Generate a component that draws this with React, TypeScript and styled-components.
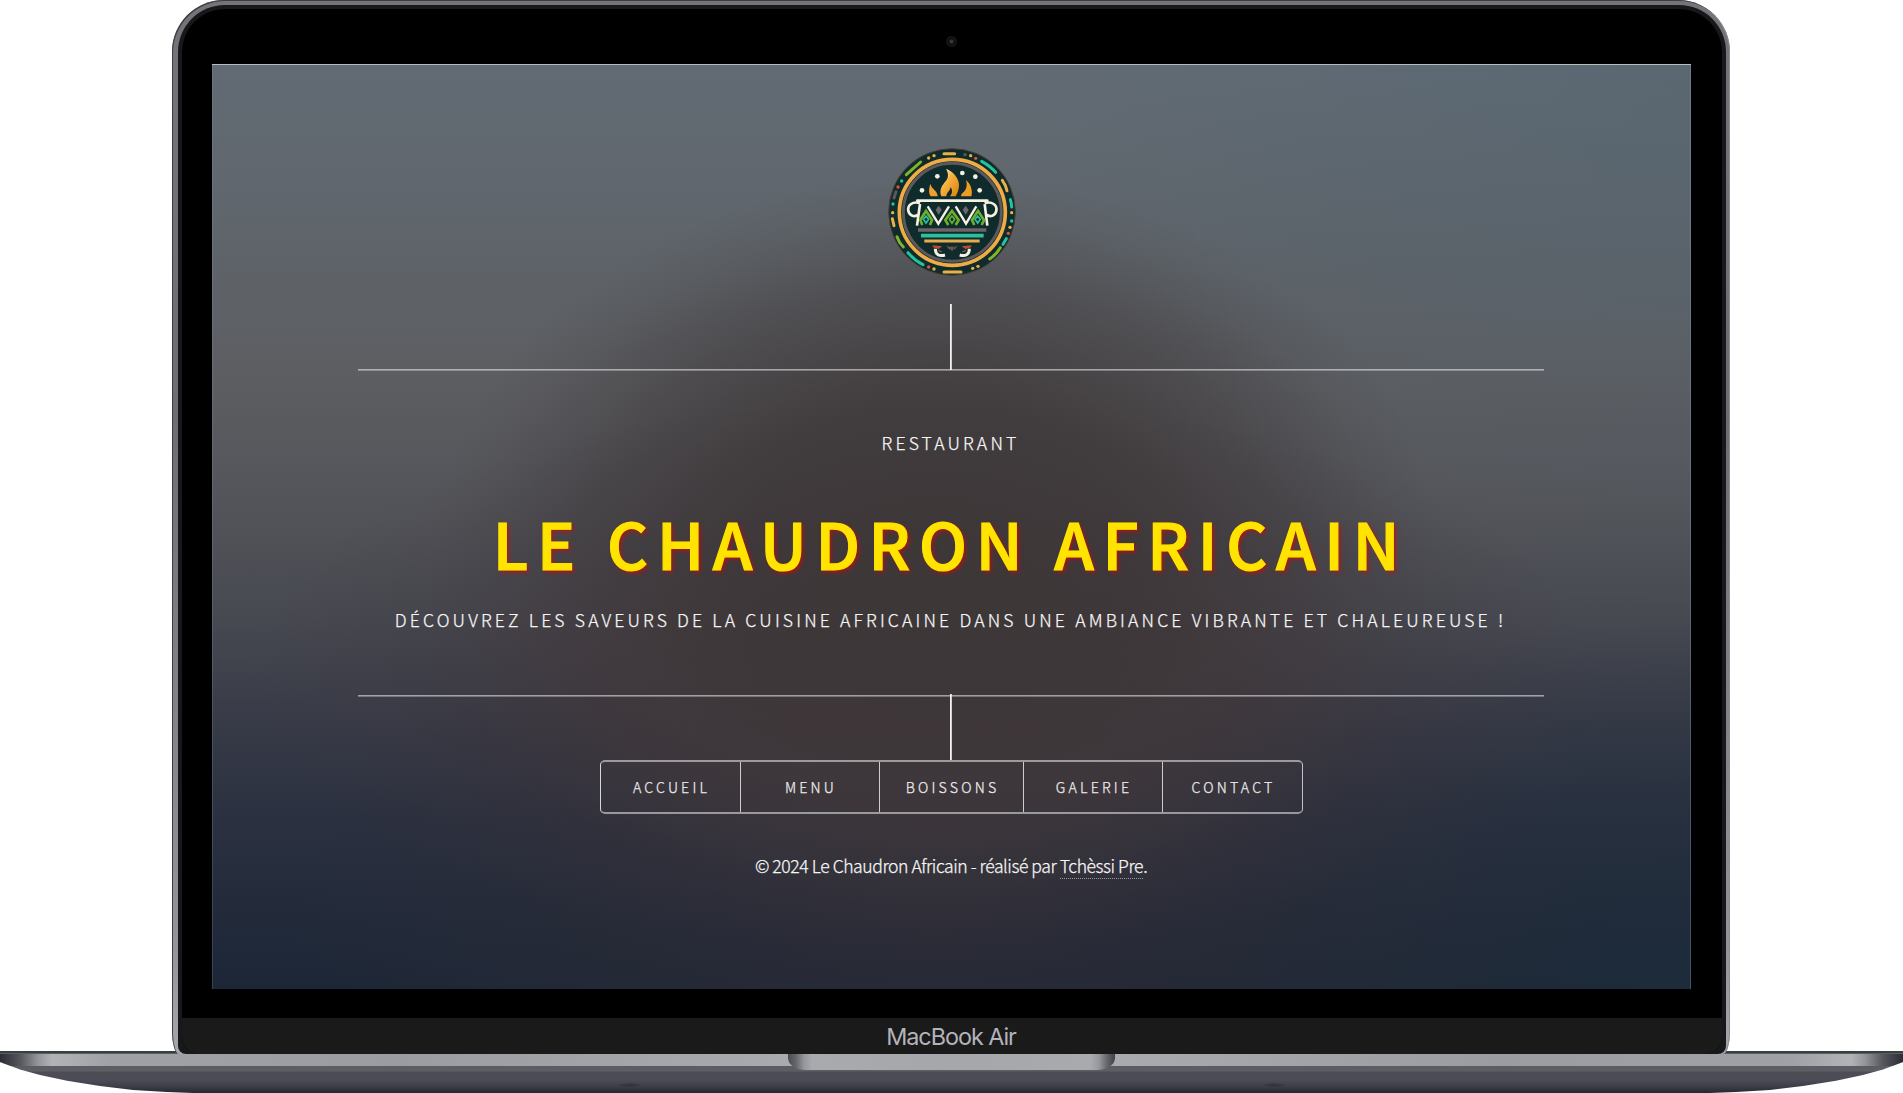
import React from "react";
import styled, { createGlobalStyle } from "styled-components";

const GlobalStyle = createGlobalStyle`
  *, *::before, *::after { box-sizing: border-box; }
  body { margin: 0; background: #fff; overflow: hidden; }
`;

const Laptop = styled.div`
  width: 1903px;
  height: 1093px;
  display: flex;
  flex-direction: column;
  align-items: center;
  overflow: hidden;
  background: #fff;
`;

const Lid = styled.div`
  position: relative;
  z-index: 1;
  flex: none;
  display: flex;
  width: 1558px;
  height: 1054px;
  margin-right: 1px;
  padding: 5px 4px 0 6px;
  border-radius: 52px 52px 7px 7px / 52px 52px 22px 22px;
  background: linear-gradient(#74747a, #6d6d74 40%, #94949b 90%, #a6a6ac);
  box-shadow: inset 1px 1px 0 #3c3c41, inset -1px 0 0 #8a8a90;
`;

const Rim = styled.div`
  flex: 1;
  min-width: 0;
  display: flex;
  padding: 4px 4px 0;
  border-radius: 47px 47px 8px 8px;
  background: #17181a;
`;

const Bezel = styled.div`
  flex: 1;
  min-width: 0;
  display: flex;
  flex-direction: column;
  align-items: center;
  overflow: hidden;
  padding-right: 2px;
  border-radius: 43px 43px 17px 17px;
  background: #000;
`;

const CameraBar = styled.div`
  flex: none;
  height: 55px;
  display: flex;
  justify-content: center;
  padding-top: 27px;
`;

const Camera = styled.span`
  width: 11px;
  height: 11px;
  border-radius: 50%;
  background: radial-gradient(circle, #35363f 0 1.5px, #0d0d10 2.5px, #161617 5px);
`;

const Screen = styled.main`
  flex: none;
  display: flex;
  flex-direction: column;
  align-items: center;
  width: 1479px;
  height: 925px;
  padding-top: 83px;
  padding-right: 1px;
  border-top: 1px solid #b9bcbc;
  color: #f6f6f6;
  font-family: "Noto Sans CJK SC", "Open Sans", sans-serif;
  font-weight: 300;
  font-size: 17.6px;
  line-height: 30px;
  -webkit-text-stroke: 0.25px currentColor;
  box-shadow: inset 1px 0 0 rgba(130, 160, 190, 0.25), inset -1px 0 0 rgba(130, 160, 190, 0.35);
  background:
    radial-gradient(ellipse 34% 41% at 49% 53%, rgba(61, 55, 56, 0.96) 0%, rgba(61, 55, 56, 0.86) 38%, rgba(63, 58, 60, 0.5) 68%, rgba(66, 62, 64, 0.15) 88%, rgba(66, 62, 64, 0) 100%),
    radial-gradient(ellipse 46% 30% at 48% 66%, rgba(69, 52, 57, 0.95) 0%, rgba(66, 53, 58, 0.7) 40%, rgba(62, 54, 60, 0.28) 72%, rgba(60, 54, 60, 0) 100%),
    radial-gradient(ellipse 44% 32% at 49% 90%, rgba(46, 44, 54, 0.85) 0%, rgba(45, 44, 54, 0.5) 50%, rgba(44, 44, 54, 0) 100%),
    radial-gradient(ellipse 46% 60% at 100% 0%, rgba(78, 99, 112, 0.4), rgba(78, 99, 112, 0)),
    radial-gradient(ellipse 40% 40% at 100% 100%, rgba(30, 46, 60, 0.6), rgba(30, 46, 60, 0)),
    linear-gradient(#626b74 0%, #5f656b 18%, #5c5d61 35%, #535459 48%, #474951 60%, #393c48 70%, #2a3040 82%, #1c2636 100%);
`;

const Logo = styled.svg`
  flex: none;
  display: block;
  width: 128px;
  height: 128px;
  margin-left: 2px;
`;

const Stem = styled.span<{ $gap?: number }>`
  flex: none;
  width: 2px;
  height: 66px;
  margin-top: ${(p) => p.$gap ?? 0}px;
  background: linear-gradient(90deg, #f2f2f2 50%, rgba(255, 255, 255, 0.75) 50%);
`;

const Rule = styled.span`
  flex: none;
  width: 1186px;
  height: 2px;
  margin-top: -1px;
  background: linear-gradient(rgba(255, 255, 255, 0.52) 50%, rgba(255, 255, 255, 0.3) 50%);
`;

const Intro = styled.section`
  flex: none;
  height: 325px;
  display: flex;
  flex-direction: column;
  align-items: center;
  padding-top: 57px;
  white-space: nowrap;
`;

const Kicker = styled.p`
  margin: 0;
  letter-spacing: 3.16px;
  text-transform: uppercase;
`;

const Title = styled.h1`
  margin: 44px 0 23px;
  color: #ffe400;
  font-size: 63.6px;
  font-weight: 500;
  line-height: 80px;
  letter-spacing: 8.75px;
  text-transform: uppercase;
  -webkit-text-stroke: 1.2px #ffe400;
  text-shadow: 2px 2px 4px rgba(225, 0, 0, 0.75);
`;

const Nav = styled.nav`
  flex: none;
  display: flex;
  height: 54px;
  margin-left: 1px;
  border: solid rgba(255, 255, 255, 0.5);
  border-width: 2px 1px;
  border-left-color: rgba(255, 255, 255, 0.8);
  border-right-color: rgba(255, 255, 255, 0.7);
  border-radius: 5px;
`;

const NavLink = styled.a<{ $wide?: boolean }>`
  display: flex;
  align-items: center;
  justify-content: center;
  width: ${(p) => (p.$wide ? 144 : 139)}px;
  padding-left: 3px;
  color: #ececec;
  font-size: 14.2px;
  letter-spacing: 3.2px;
  text-transform: uppercase;
  text-decoration: none;

  & + & { border-left: 1px solid rgba(255, 255, 255, 0.75); }
  &:last-child { width: 140px; }
`;

const Footer = styled.footer`
  margin: 37px 0 0 1px;
  letter-spacing: -0.45px;
  white-space: nowrap;
`;

const Author = styled.a`
  display: inline-block;
  height: 28px;
  color: inherit;
  text-decoration: none;
  border-bottom: 1px dotted rgba(255, 255, 255, 0.5);
`;

const Chin = styled.div`
  flex: none;
  align-self: stretch;
  display: flex;
  justify-content: center;
  height: 36px;
  margin: 29px -2px 0 0;
  padding: 4px 2px 0 0;
  background: #1a1a1a;
  color: #b3b3b9;
  font: 400 23.4px/30px Inter, "Liberation Sans", sans-serif;
  letter-spacing: -1.05px;
`;

const Base = styled.div`
  flex: none;
  display: flex;
  flex-direction: column;
  align-items: center;
  width: 1903px;
  height: 42px;
  margin-top: -3px;
  background: linear-gradient(
    #393e3e 0 2px, #7c8080 3px, #a3a4a8 4px, #a3a4a8 15px, #5b5c63 15px, #5e5f66 20px,
    #4c4d55 21px, #4b4c55 29px, #3c3c46 36px, #262630 42px
  );
  clip-path: polygon(
    0 0, 100% 0, 100% 11px, 1883px 18.5px, 1863px 24px, 1836px 29.7px, 1803px 35px, 1770px 39px, 1736px 41px, 1710px 42px,
    193px 42px, 167px 41px, 133px 39px, 100px 35px, 67px 29.7px, 40px 24px, 20px 18.5px, 0 11px
  );
`;

const Edge = styled.div`
  flex: none;
  display: flex;
  justify-content: center;
  width: 100%;
  height: 12px;
  margin-top: 3px;
  background: linear-gradient(
    90deg, #2c2c36 0, #55555d 20px, #94959a 38px, #b2b3b7 52px, #a0a1a6 110px, #9b9ca1 400px, #a9aaae 780px,
    #a9aaae 1120px, #9b9ca1 1500px, #a0a1a6 1793px, #b2b3b7 1851px, #94959a 1865px, #55555d 1883px, #2c2c36 100%
  );
`;

const Notch = styled.div`
  width: 327px;
  height: 16px;
  border-radius: 0 0 18px 18px / 0 0 12px 12px;
  background: linear-gradient(
    90deg, #4b4b52 0, #66676d 8px, #96979c 16px, #a9aaae 24px, #a6a7ab 50%, #a9aaae 303px, #96979c 311px, #66676d 319px, #3f3f47 100%
  );
`;

const Feet = styled.div`
  display: flex;
  justify-content: space-between;
  width: 666px;
  margin-top: 17px;
`;

const Foot = styled.span`
  width: 22px;
  height: 4px;
  border-radius: 50%;
  background: radial-gradient(ellipse, rgba(20, 20, 28, 0.35), rgba(20, 20, 28, 0));
`;

const links = ["Accueil", "Menu", "Boissons", "Galerie", "Contact"];

const ORANGE = "#e9b04a";
const TEAL = "#22c3a0";
const GREEN = "#7fb52c";
const RED = "#d9553a";
const GREY = "#5d585c";
const CREAM = "#f3f1e2";

const dashes: [string, string][] = [
  ["M222 71H254", ORANGE],
  ["M222 426H273", ORANGE],
  ["M109 134L152 96", GREEN],
  ["M335 94Q362 109 377 127", TEAL],
  ["M397 151Q408 166 411 182", ORANGE],
  ["M421 209Q425 220 425 231", TEAL],
  ["M409 326L399 343", TEAL],
  ["M391 353Q378 374 359 387", GREEN],
  ["M81 320Q87 338 100 351", GREEN],
  ["M114 368Q134 392 159 404", TEAL],
  ["M67 266L72 287", ORANGE],
  ["M78 185L72 204", GREY],
];

const dots: [number, number, string][] = [
  [176, 84, ORANGE], [192, 77, ORANGE], [285, 74, GREY], [302, 77, ORANGE], [317, 85, RED],
  [95, 153, TEAL], [84, 171, RED], [69, 222, TEAL], [68, 248, ORANGE],
  [425, 248, ORANGE], [425, 273, TEAL], [420, 292, ORANGE], [415, 310, RED],
  [176, 411, RED], [192, 417, ORANGE], [308, 415, ORANGE], [324, 409, ORANGE],
];

const sparks: [number, number][] = [[202, 139], [277, 129], [316, 140], [156, 181], [329, 181]];

function CauldronLogo() {
  return (
    <Logo viewBox="54 54 384 384" fill="none">
      <defs>
        <linearGradient id="flame" x1="0" y1="0" x2="1" y2="1">
          <stop offset="0.15" stopColor="#fbe6bd" />
          <stop offset="0.42" stopColor="#f6b23e" />
          <stop offset="1" stopColor="#dd7d0c" />
        </linearGradient>
      </defs>
      <circle cx="246" cy="246" r="190" fill="#0f2b2b" stroke="#4a3f35" strokeWidth="3" />
      {dashes.map(([d, c]) => (
        <path key={d} d={d} stroke={c} strokeWidth="9" strokeLinecap="round" />
      ))}
      {dots.map(([x, y, c]) => (
        <circle key={`${x}-${y}`} cx={x} cy={y} r="5" fill={c} />
      ))}
      <circle cx="247" cy="247" r="159" stroke="#efac45" strokeWidth="11" />
      <circle cx="247" cy="247" r="147" stroke={GREY} strokeWidth="9" />
      {sparks.map(([x, y]) => (
        <circle key={x} cx={x} cy={y} r="7" fill={CREAM} />
      ))}
      <path d="M228 116C250 124 267 145 267 165C267 180 262 190 257 199H240C248 190 248 180 242 171C240 184 230 186 229 199H214C206 178 218 164 228 152C236 142 236 130 228 116Z" fill="url(#flame)" />
      <path d="M181 161C184 177 203 182 203 199H182C175 188 177 174 181 161Z" fill="#f0a02a" />
      <path d="M288 150C303 162 309 184 304 199H273C274 188 281 190 287 178C291 168 291 160 288 150Z" fill="#ee9c24" />
      <g stroke={CREAM} strokeWidth="8">
        <path d="M142 212H352" strokeLinecap="round" />
        <path d="M150 220C128 212 112 226 115 242C118 258 134 262 145 254M150 222L141 287" />
        <path d="M344 220C366 212 382 226 379 242C376 258 360 262 349 254M344 222L352 287" />
        <path d="M173 229L205 281L237 229M257 229L288 281L319 229" strokeWidth="7" />
      </g>
      <path d="M206 227L215 240L206 254L197 240ZM287 227L296 240L287 254L278 240Z" fill="#6d666b" />
      <g stroke="#6fae2c" strokeWidth="8">
        <path d="M157 285L151 270L168 243L186 270L180 285" />
        <path d="M235 285L226 270L246 243L266 270L257 285" />
        <path d="M313 285L306 270L324 243L342 270L335 285" />
      </g>
      <g stroke={TEAL} strokeWidth="5">
        <path d="M168 258L176 268L168 279L160 268ZM323 258L331 268L323 279L315 268Z" />
        <path d="M246 258L254 268L246 280L238 268Z" stroke="#5fb43a" />
      </g>
      <path d="M144 300H349" stroke="#6c6468" strokeWidth="10" />
      <path d="M153 317H341" stroke="#2cc0a0" strokeWidth="11" />
      <path d="M163 333H329" stroke="#e5ae4c" strokeWidth="9" />
      <path d="M188 346L217 349L206 357L189 352ZM304 346L275 349L286 357L303 352Z" fill="#c4482c" />
      <path d="M228 346L243 354L238 359ZM264 346L250 354L254 359ZM236 350H256L246 364Z" fill="#75564f" />
      <path d="M196 356C196 374 208 380 225 375M298 356C298 374 286 380 269 375" stroke={CREAM} strokeWidth="9" />
      <path d="M205 361L216 366M288 361L277 366" stroke="#6d666b" strokeWidth="4" />
    </Logo>
  );
}

export default function App() {
  return (
    <>
      <GlobalStyle />
      <Laptop>
        <Lid>
          <Rim>
            <Bezel>
              <CameraBar>
                <Camera />
              </CameraBar>
              <Screen>
                <CauldronLogo />
                <Stem $gap={28} />
                <Rule />
                <Intro>
                  <Kicker>Restaurant</Kicker>
                  <Title>Le Chaudron Africain</Title>
                  <Kicker>
                    Découvrez les saveurs de la cuisine africaine dans une ambiance vibrante et chaleureuse !
                  </Kicker>
                </Intro>
                <Rule />
                <Stem $gap={-3} />
                <Nav>
                  {links.map((label) => (
                    <NavLink key={label} $wide={label === "Boissons"}>
                      {label}
                    </NavLink>
                  ))}
                </Nav>
                <Footer>
                  © 2024 Le Chaudron Africain - réalisé par <Author>Tchèssi Pre</Author>.
                </Footer>
              </Screen>
              <Chin>MacBook Air</Chin>
            </Bezel>
          </Rim>
        </Lid>
        <Base>
          <Edge>
            <Notch />
          </Edge>
          <Feet>
            <Foot />
            <Foot />
          </Feet>
        </Base>
      </Laptop>
    </>
  );
}
